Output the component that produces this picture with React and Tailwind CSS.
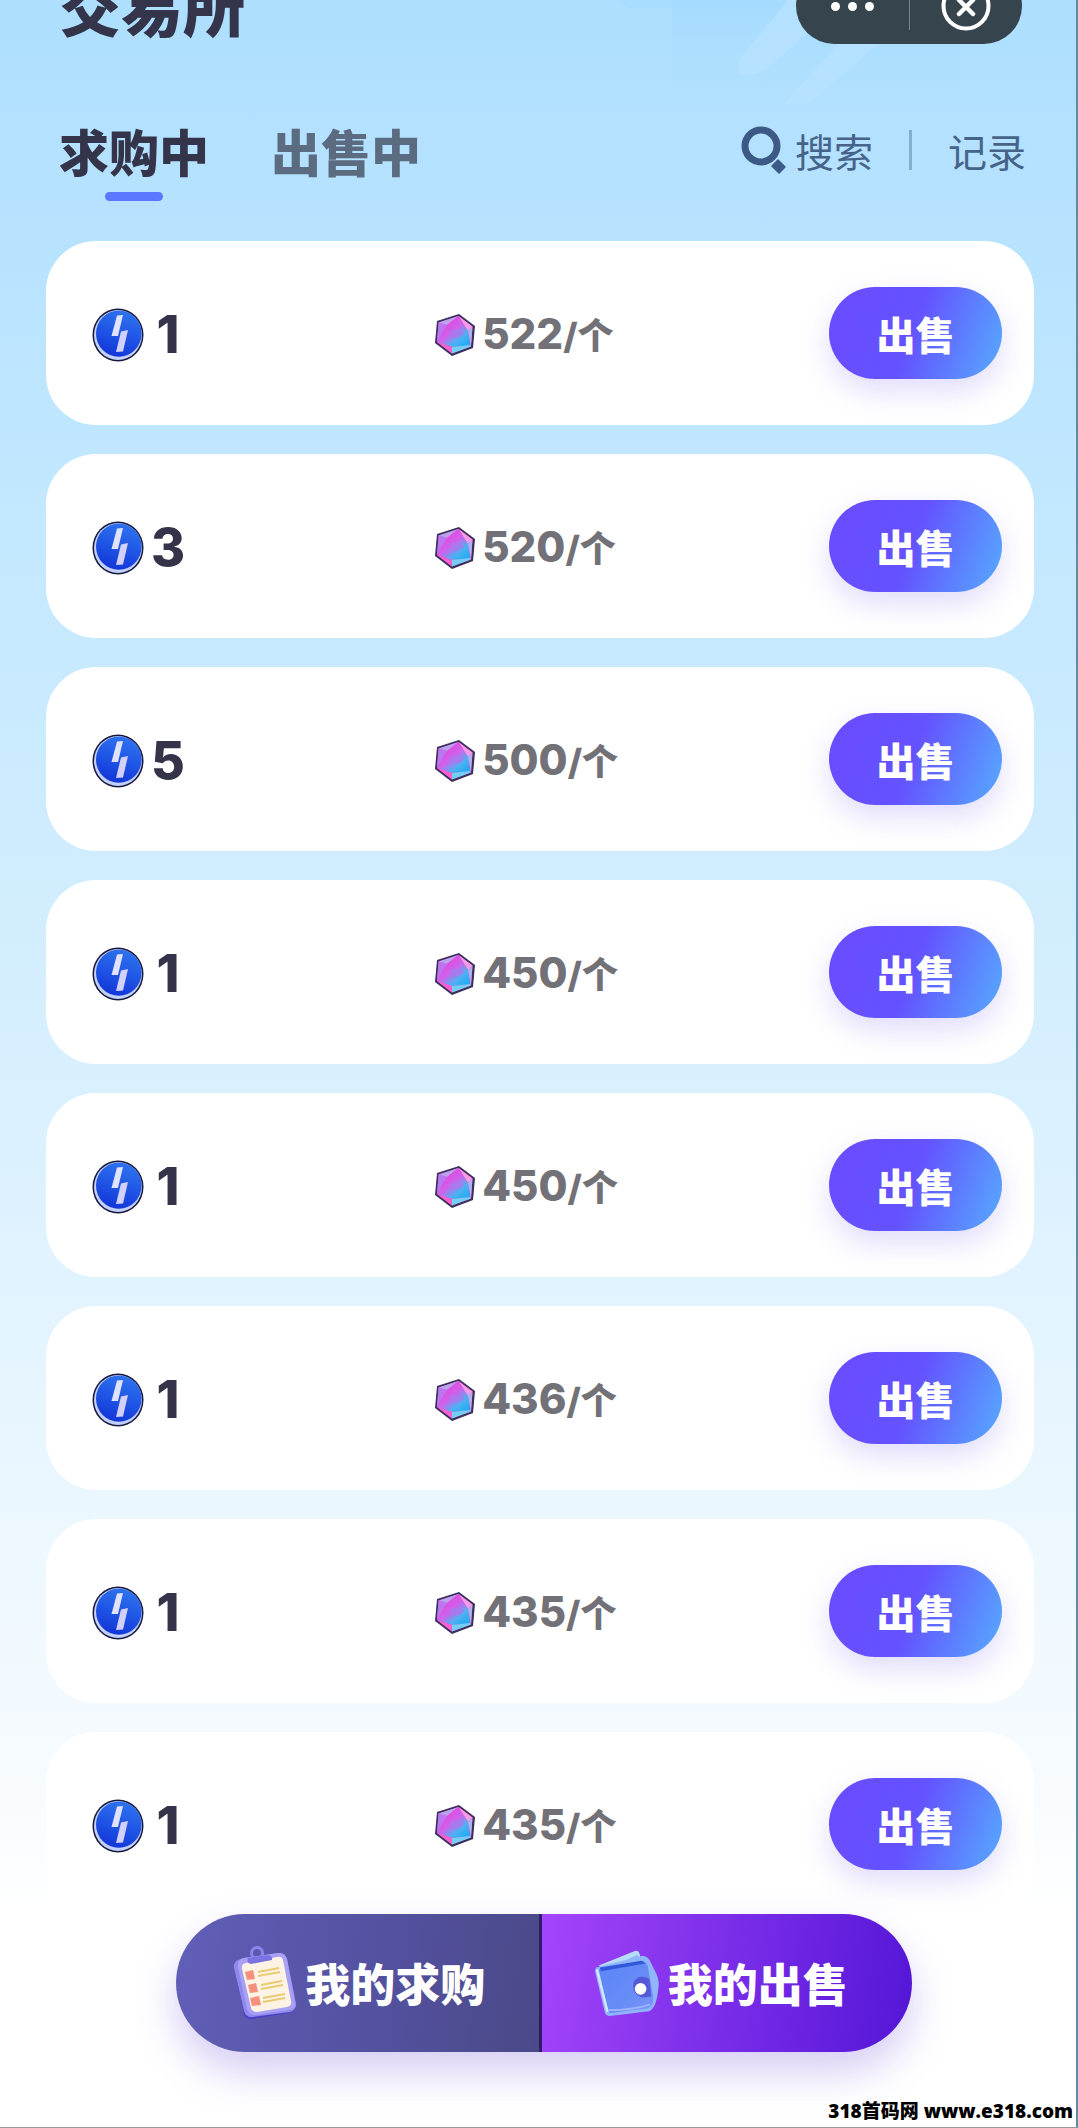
import React, { useState } from "react";

const orders = [
  { id: 1, amount: 1, price: 522 },
  { id: 2, amount: 3, price: 520 },
  { id: 3, amount: 5, price: 500 },
  { id: 4, amount: 1, price: 450 },
  { id: 5, amount: 1, price: 450 },
  { id: 6, amount: 1, price: 436 },
  { id: 7, amount: 1, price: 435 },
  { id: 8, amount: 1, price: 435 },
];

const CoinIcon = () => (
  <svg viewBox="0 0 52 54" className="w-[52px] h-[54px] shrink-0" aria-hidden="true">
    <defs>
      <linearGradient id="coinFace" x1="0.7" y1="0" x2="0.4" y2="1">
        <stop offset="0" stopColor="#2f74ee" />
        <stop offset="0.5" stopColor="#2057e6" />
        <stop offset="1" stopColor="#1236d8" />
      </linearGradient>
    </defs>
    <ellipse cx="26" cy="27" rx="25.5" ry="26.5" fill="#17193f" />
    <ellipse cx="26" cy="27" rx="24" ry="25" fill="#c3d0fa" />
    <ellipse cx="26.8" cy="25.6" rx="22.8" ry="23.2" fill="url(#coinFace)" />
    <path d="M25 7.5 L31 7 L26 28 L19.500 28 Z" fill="#dfe3ff" />
    <path d="M29 23.500 L36 22 L31 43.500 L24 44 Z" fill="#d3d0fb" />
  </svg>
);

const GemIcon = () => (
  <svg viewBox="0 0 42 44" className="w-[42px] h-[44px] shrink-0" aria-hidden="true">
    <defs>
      <linearGradient id="gemFront" x1="0.2" y1="0.1" x2="0.9" y2="0.9">
        <stop offset="0" stopColor="#e83fdc" />
        <stop offset="0.45" stopColor="#cf62ea" />
        <stop offset="0.75" stopColor="#4fb0f3" />
        <stop offset="1" stopColor="#22aef2" />
      </linearGradient>
    </defs>
    <path d="M3 8 L25 1 L41 13 L39 35 L18 43 L1 30 Z" fill="#3b2f5c" />
    <path d="M4.500 9.500 L24.500 3 L38.500 13.500 L37 33.500 L18 40.500 L3 29 Z" fill="#e24fe0" />
    <path d="M4.500 9.500 L24.500 3 L13 12 Z" fill="#b9a4ec" />
    <path d="M24.500 3 L38.500 13.500 L34 18 Z" fill="#f79be6" />
    <path d="M4.500 9.500 L13 12 L3 29 Z" fill="#b877ee" />
    <path d="M24.500 3 L13 12 L3 29 L18 34 L36 32 L34 18 Z" fill="url(#gemFront)" />
    <path d="M38.500 13.500 L37 33.500 L34 18 Z" fill="#a9b4ec" />
    <path d="M16 18 Q25 14 30 20 Q26 26 17 25 Z" fill="#a779ee" opacity="0.8" />
    <path d="M3 29 L18 34 L18 40.500 Z" fill="#fa5fd0" />
    <path d="M18 34 L36 32 L37 33.500 L18 40.500 Z" fill="#72cff2" />
  </svg>
);

const SearchIcon = () => (
  <svg viewBox="0 0 46 48" className="w-[46px] h-[48px]" aria-hidden="true">
    <circle cx="20" cy="20" r="16" fill="none" stroke="#3d5a86" strokeWidth="7" />
    <path d="M37 34 L44 41 L38 47 L31 40 Z" fill="#3d5a86" stroke="#3d5a86" strokeWidth="1.500" strokeLinejoin="round" />
  </svg>
);

const ClipboardIcon = () => (
  <svg viewBox="0 0 64 74" className="w-[64px] h-[74px] shrink-0" aria-hidden="true">
    <path d="M2 26 L11 68 Q13 74 20 73 L56 67 Q64 65 63 58 L60 54 Z" fill="#4a3fc4" />
    <path d="M9 13 L45 7 Q52 6 54 13 L63 57 Q64 64 57 66 L20 71 Q13 72 11 65 L1 22 Q0 14 9 13 Z" fill="#9088ec" />
    <path d="M10 12 L45 7 Q52 6 54 13 L62 57 Q63 63 57 64 L22 69 Q16 69 14 63 L5 21 Q4 14 10 12 Z" fill="#a7a0f5" />
    <path d="M13 17 L44 11 Q49 10 50 14 L58 55 Q59 60 54 61 L24 66 Q19 66 18 62 L9 23 Q8 18 13 17 Z" fill="#fdf3e4" />
    <circle cx="24" cy="7" r="5.500" fill="none" stroke="#8c85ee" strokeWidth="3" />
    <path d="M15 12 L35 9 Q40 10 39 14 L18 18 Q13 17 15 12 Z" fill="#7b72e2" />
    <g fill="#f4907c">
      <path d="M12 26 L20 24 L22 33 L14 34 Z" />
      <path d="M15 39 L23 37 L25 46 L17 47 Z" />
      <path d="M17 52 L26 50 L28 59 L19 60 Z" />
    </g>
    <g stroke="#e8cb72" strokeWidth="2">
      <path d="M25 26 L46 22 M25 30 L47 26" />
      <path d="M28 39 L49 35 M28 43 L50 39" />
      <path d="M30 52 L52 48 M30 56 L52 52" />
    </g>
  </svg>
);

const WalletIcon = () => (
  <svg viewBox="0 0 68 68" className="w-[66px] h-[66px] shrink-0" aria-hidden="true">
    <defs>
      <linearGradient id="walletFace" x1="0" y1="0" x2="1" y2="1">
        <stop offset="0" stopColor="#5b86f8" />
        <stop offset="0.6" stopColor="#668cf6" />
        <stop offset="1" stopColor="#7f93fb" />
      </linearGradient>
    </defs>
    <path d="M5 16 L42 1 Q46 0 47 4 L50 14 L12 24 Z" fill="#b5dcfb" />
    <path d="M18 17 L45 5 L48 13 L22 19 Z" fill="#8db9f2" />
    <path d="M2 18 L50 6 Q57 7 59 14 L64 24 Q68 32 66 42 Q64 60 57 63 L16 68 Q12 68 11 64 L1 22 Z" fill="#91b5fb" />
    <path d="M5 20 L50 11 Q55 12 56 20 L61 48 Q62 57 56 60 L18 65 Q15 65 14 61 Z" fill="url(#walletFace)" />
    <path d="M6 18 L49 11 L53 14 L7 22 Z" fill="#3158d8" />
    <path d="M3 20 L14 64" stroke="#d3e7ff" strokeWidth="2.500" />
    <path d="M15 62 Q40 62 58 56" fill="none" stroke="#9db4ff" strokeWidth="2" />
    <path d="M57 30 Q46 24 41 33 Q38 45 50 49 L59 48 Z" fill="#5559d8" />
    <circle cx="48" cy="40" r="6" fill="#fff" />
  </svg>
);

// pale blocks and rays behind the top right corner
const HeaderPattern = () => (
  <svg viewBox="0 0 344 110" className="absolute top-0 right-[114px] w-[344px] h-[110px]" aria-hidden="true">
    <defs>
      <linearGradient id="patternFade" x1="0" y1="0" x2="0" y2="1">
        <stop offset="0" stopColor="#9fd9ff" stopOpacity="0.6" />
        <stop offset="1" stopColor="#a9dcff" stopOpacity="0" />
      </linearGradient>
    </defs>
    <path d="M0 0 H54 V8 H12 Q4 7 0 0 Z" fill="#a5dcff" opacity="0.6" />
    <rect x="54" width="288" height="110" fill="url(#patternFade)" />
    <path d="M170 0 L206 0 L206 18 L148 70 Q134 78 122 74 Q118 66 124 56 Z" fill="#b9e3ff" opacity="0.7" />
    <path d="M220 44 L260 44 L190 104 L166 104 Z" fill="#b9e3ff" opacity="0.6" />
  </svg>
);

const OrderCard = ({ order }) => (
  <li className="grid grid-cols-[13fr_15fr_173px] items-center h-[184px] pl-[46px] pr-8 rounded-[50px] bg-white">
    <div className="flex items-center gap-2 pt-1">
      <CoinIcon />
      <span className="w-8 flex justify-center font-['Inter',sans-serif] font-extrabold text-[52px] leading-[54px] text-[#34334a]">
        {order.amount}
      </span>
    </div>
    <div className="flex items-center gap-[6px] pt-1 text-[#727178]">
      <GemIcon />
      <p className="flex items-baseline font-['Inter','Noto_Sans_CJK_SC',sans-serif] font-extrabold text-[42px] leading-[44px]">
        {order.price}
        <span className="text-4xl leading-[44px]">/个</span>
      </p>
    </div>
    <button
      type="button"
      className="h-[92px] rounded-full bg-[linear-gradient(110deg,#694bff_0%,#6452ff_48%,#57a3ff_95%)] shadow-[0_12px_30px_rgba(98,80,230,0.2)] text-white text-[39px] leading-[44px] font-black"
    >
      出售
    </button>
  </li>
);

const App = () => {
  const [tab, setTab] = useState("buy");

  const tabs = [
    { key: "buy", label: "求购中" },
    { key: "sell", label: "出售中" },
  ];

  return (
    <div className="relative min-h-screen overflow-hidden font-['Noto_Sans_CJK_SC_Black','Noto_Sans_CJK_SC',sans-serif] border-r-2 border-b border-r-[#5f8ba6] border-b-[#9a9a9a] bg-[linear-gradient(180deg,#aedfff_0%,#b8e3ff_12%,#c1e7ff_22%,#d3eefe_45%,#e6f5ff_65%,#f6fbff_83%,#ffffff_90%)]">
      <HeaderPattern />

      <header className="relative flex items-end justify-between h-11 pl-[59px] pr-[54px]">
        <h1 className="pb-2 text-[62px] leading-[62px] font-black text-[#34344a]">交易所</h1>
        <div className="flex items-center shrink-0 w-[226px] h-[76px] rounded-full bg-[#36444d] text-white">
          <button type="button" aria-label="更多" className="flex flex-1 items-center justify-center gap-2">
            <span className="size-[9px] rounded-full bg-white" />
            <span className="size-[9px] rounded-full bg-white" />
            <span className="size-[9px] rounded-full bg-white" />
          </button>
          <span className="w-px h-12 bg-[#78848c]" />
          <button type="button" aria-label="关闭" className="flex flex-1 items-center justify-center">
            <svg viewBox="0 0 50 50" className="size-[50px]" fill="none" stroke="currentColor">
              <circle cx="25" cy="25" r="22.500" strokeWidth="4" />
              <path d="M18 19 L32 33 M32 19 L18 33" strokeWidth="4.500" strokeLinecap="round" />
            </svg>
          </button>
        </div>
      </header>

      <div className="relative flex items-start justify-between pt-[76px] pl-[59px] pr-[50px]">
        <nav className="flex gap-[62px]">
          {tabs.map((t) => (
            <button
              key={t.key}
              type="button"
              onClick={() => setTab(t.key)}
              className={`flex flex-col items-center gap-3 text-[50px] leading-[60px] font-black ${tab === t.key ? "text-[#34344a]" : "text-[#5b6b80]"}`}
            >
              {t.label}
              {tab === t.key && <span className="w-[58px] h-[9px] rounded-full bg-[#5b76ff]" />}
            </button>
          ))}
        </nav>
        <div className="flex items-center h-[60px] font-['Noto_Sans_CJK_SC',sans-serif] text-[39px] leading-[60px] text-[#46648a]">
          <button type="button" className="flex items-center gap-2">
            <SearchIcon />
            搜索
          </button>
          <span className="w-[3px] h-10 mx-9 bg-[#84afcf]" />
          <button type="button">记录</button>
        </div>
      </div>

      <ul className="relative flex flex-col gap-[29px] mt-10 pl-[46px] pr-[42px] pb-[211px]">
        {orders.map((order) => (
          <OrderCard key={order.id} order={order} />
        ))}
      </ul>

      {/* Bottom actions */}
      <div className="absolute inset-x-0 bottom-[75px] flex justify-center pl-3">
        <div className="flex w-[736px] h-[138px] rounded-full overflow-hidden text-white text-[45px] leading-[60px] font-bold shadow-[0_20px_40px_rgba(120,90,220,0.3)]">
          <button type="button" className="flex flex-1 items-center justify-center gap-2 pl-1 border-r-[3px] border-[#2a1c68] bg-[linear-gradient(100deg,#615fb8_0%,#5552a2_50%,#4a4988_100%)]">
            <ClipboardIcon />
            我的求购
          </button>
          <button type="button" className="flex flex-1 items-center justify-center gap-2 pr-3 bg-[linear-gradient(100deg,#a445fa_0%,#7a2de8_50%,#5316d6_100%)]">
            <WalletIcon />
            我的出售
          </button>
        </div>
      </div>

      <p className="absolute right-[3px] bottom-1 font-['Open_Sans','Noto_Sans_CJK_SC',sans-serif] font-extrabold text-[19px] leading-6 text-black">
        318首码网 www.e318.com
      </p>
    </div>
  );
};

export default App;
